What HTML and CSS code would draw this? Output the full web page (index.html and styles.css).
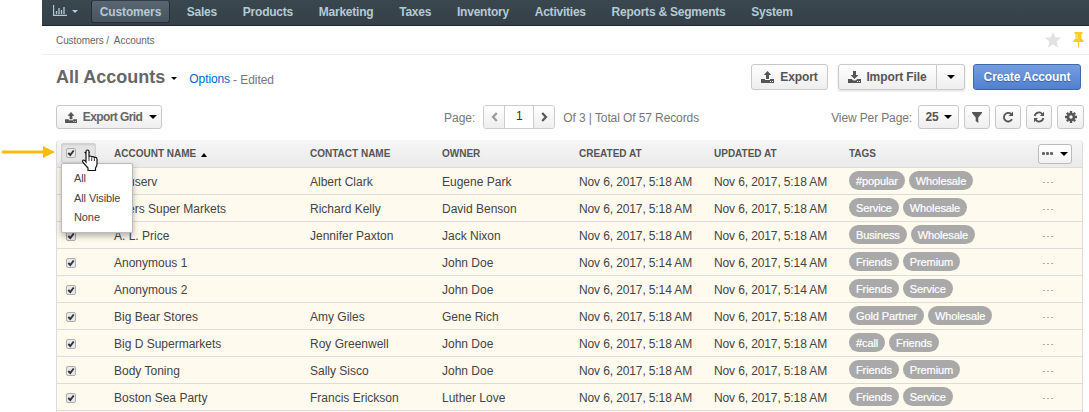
FILE: index.html
```html
<!DOCTYPE html>
<html lang="en">
<head>
<meta charset="utf-8">
<title>All Accounts</title>
<link rel="stylesheet" href="styles.css">
</head>
<body>
<svg class="defs" aria-hidden="true">
  <symbol id="upload" viewBox="0 0 13 12"><path d="M6.500 0 10.300 4H8v4H5V4H2.700zM0 8h4v1h5V8h4v4H0zM9 10v1h1v-1zm2 0v1h1v-1z" fill-rule="evenodd"/></symbol>
  <symbol id="download" viewBox="0 0 13 12"><path d="M5 0h3v4h2.500l-4 4-4-4H5zM0 8h3.600l2 1.500h1.800L9.400 8H13v4H0zM9 10v1h1v-1zm2 0v1h1v-1z" fill-rule="evenodd"/></symbol>
  <symbol id="check" viewBox="0 0 12 12"><rect x=".5" y=".5" width="9" height="9" rx="1.500" fill="#e9e9e9" stroke="#adadad"/><path d="M2.300 5 4.300 7 7.700 2.500" fill="none" stroke="#333" stroke-width="1.900"/></symbol>
</svg>
<div class="app">
  <nav class="nav">
    <span class="dash"><svg width="14" height="11" viewBox="0 0 14 11"><path d="M.5 0v10.500H14M3.500 9V6M6 9V3M8.500 9V5M11 9V2" fill="none" stroke="currentColor" stroke-width="1.300"/></svg><i class="caret light"></i></span>
    <a class="item active">Customers</a><a class="item">Sales</a><a class="item">Products</a><a class="item">Marketing</a><a class="item">Taxes</a><a class="item">Inventory</a><a class="item">Activities</a><a class="item">Reports &amp; Segments</a><a class="item">System</a>
  </nav>
  <div class="crumbs">
    <span class="trail">Customers /&nbsp; Accounts</span>
    <span class="marks">
      <svg width="16" height="16" viewBox="0 0 16 16"><path d="m8 0 2.300 5.300 5.700.5-4.300 3.800L13 15.500l-5-3-5 3 1.300-5.900L0 5.800l5.700-.5z" fill="#e2e2e2"/></svg>
      <svg width="11" height="16" viewBox="0 0 11 16"><path d="M1.500 0h8v2h-1v4.500q2 1.200 2.500 3.500H6.200L5.800 16h-.6L4.700 10H0q.5-2.300 2.500-3.500V2h-1z" fill="#fbcb28"/><path d="M4 2v5" stroke="#fff2b8" stroke-width=".8"/></svg>
    </span>
  </div>
  <div class="title-row">
    <h1>All Accounts</h1><i class="caret title-caret"></i>
    <a class="options">Options</a><span class="edited">- Edited</span>
    <div class="actions">
      <button class="btn export"><svg width="13" height="12"><use href="#upload"/></svg>Export</button>
      <div class="split"><button class="btn import"><svg width="13" height="12"><use href="#download"/></svg>Import File</button><button class="btn more"><i class="caret"></i></button></div>
      <button class="btn create">Create Account</button>
    </div>
  </div>
  <div class="toolbar">
    <button class="btn grid-export"><svg width="12" height="11"><use href="#upload"/></svg><span>Export Grid</span><i class="caret"></i></button>
    <div class="pager">
      <span class="page-label">Page:</span>
      <div class="pages"><span class="step off"><svg width="7" height="10" viewBox="0 0 7 10"><path d="M5.800 1 2 5l3.800 4" fill="none" stroke="#999" stroke-width="2.200"/></svg></span><span class="num">1</span><span class="step"><svg width="7" height="10" viewBox="0 0 7 10"><path d="M1.200 1 5 5 1.200 9" fill="none" stroke="#555" stroke-width="2.200"/></svg></span></div>
      <span class="total">Of 3 | Total Of 57 Records</span>
    </div>
    <div class="view">
      <span class="view-label">View Per Page:</span>
      <button class="btn size">25<i class="caret"></i></button>
      <button class="btn sq"><svg width="10" height="11" viewBox="0 0 10 11"><path d="M0 0h10v1L6.300 5.500V11L3.700 9V5.500L0 1z"/></svg></button>
      <button class="btn sq"><svg width="12" height="12" viewBox="0 0 12 12"><path d="M10 8.300A4.300 4.300 0 1 1 9 2.900" fill="none" stroke="currentColor" stroke-width="1.800"/><path d="M11 .5V5H6.500z"/></svg></button>
      <button class="btn sq"><svg width="12" height="12" viewBox="0 0 12 12"><path d="M1.700 5A4.300 4.300 0 0 1 9.300 3.100M10.300 7A4.300 4.300 0 0 1 2.700 8.900" fill="none" stroke="currentColor" stroke-width="1.700"/><path d="M11 .8V5H7zM1 11.200V7h4z"/></svg></button>
      <button class="btn sq gear"><svg width="12" height="12" viewBox="0 0 12 12"><circle cx="6" cy="6" r="3" fill="none" stroke="currentColor" stroke-width="2.600"/><path d="M6 0v2M6 10v2M0 6h2M10 6h2M1.800 1.800l1.400 1.400M8.800 8.800l1.400 1.400M1.800 10.200l1.400-1.400M8.800 3.200l1.400-1.400" stroke="currentColor" stroke-width="2.400"/></svg></button>
    </div>
  </div>
  <div class="grid">
    <div class="row head">
      <div class="select-cell"><div class="select-all"><svg width="12" height="12"><use href="#check"/></svg><i class="caret"></i></div>
        <div class="menu"><a>All</a><a>All Visible</a><a>None</a></div>
        <svg class="hand" width="18" height="23" viewBox="0 0 18 23"><path d="M5 13V2.500Q5 1 6.500 1T8 2.500V8q0-1 1.300-1t1.400 1.300q0-.8 1.300-.7t1.400 1.500q0-.8 1.200-.7T16 10v5q0 2-1.500 4v2.500H7V19L2 13.500Q1 12 2 11.200t3 1.800z" fill="#fff" stroke="#111" stroke-width="1.200"/><path d="M8 8v4M10.700 8.500V12M13.400 9.200V12" stroke="#222" stroke-width=".9"/></svg>
      </div>
      <span>Account Name<i class="sort"></i></span><span>Contact Name</span><span>Owner</span><span>Created At</span><span>Updated At</span><span>Tags</span>
      <div class="cols"><b class="dots"><i></i><i></i><i></i></b><i class="caret"></i></div>
    </div>
    <div class="row"><svg class="cb" width="12" height="12"><use href="#check"/></svg><span>Acuserv</span><span>Albert Clark</span><span>Eugene Park</span><span class="date">Nov 6, 2017, 5:18 AM</span><span class="date">Nov 6, 2017, 5:18 AM</span><span class="tags"><em>#popular</em><em>Wholesale</em></span><span class="dots"><i></i><i></i><i></i></span></div>
    <div class="row"><svg class="cb" width="12" height="12"><use href="#check"/></svg><span>Akers Super Markets</span><span>Richard Kelly</span><span>David Benson</span><span class="date">Nov 6, 2017, 5:18 AM</span><span class="date">Nov 6, 2017, 5:18 AM</span><span class="tags"><em>Service</em><em>Wholesale</em></span><span class="dots"><i></i><i></i><i></i></span></div>
    <div class="row"><svg class="cb" width="12" height="12"><use href="#check"/></svg><span>A. L. Price</span><span>Jennifer Paxton</span><span>Jack Nixon</span><span class="date">Nov 6, 2017, 5:18 AM</span><span class="date">Nov 6, 2017, 5:18 AM</span><span class="tags"><em>Business</em><em>Wholesale</em></span><span class="dots"><i></i><i></i><i></i></span></div>
    <div class="row"><svg class="cb" width="12" height="12"><use href="#check"/></svg><span>Anonymous 1</span><span></span><span>John Doe</span><span class="date">Nov 6, 2017, 5:14 AM</span><span class="date">Nov 6, 2017, 5:14 AM</span><span class="tags"><em>Friends</em><em>Premium</em></span><span class="dots"><i></i><i></i><i></i></span></div>
    <div class="row"><svg class="cb" width="12" height="12"><use href="#check"/></svg><span>Anonymous 2</span><span></span><span>John Doe</span><span class="date">Nov 6, 2017, 5:14 AM</span><span class="date">Nov 6, 2017, 5:14 AM</span><span class="tags"><em>Friends</em><em>Service</em></span><span class="dots"><i></i><i></i><i></i></span></div>
    <div class="row"><svg class="cb" width="12" height="12"><use href="#check"/></svg><span>Big Bear Stores</span><span>Amy Giles</span><span>Gene Rich</span><span class="date">Nov 6, 2017, 5:18 AM</span><span class="date">Nov 6, 2017, 5:18 AM</span><span class="tags"><em>Gold Partner</em><em>Wholesale</em></span><span class="dots"><i></i><i></i><i></i></span></div>
    <div class="row"><svg class="cb" width="12" height="12"><use href="#check"/></svg><span>Big D Supermarkets</span><span>Roy Greenwell</span><span>John Doe</span><span class="date">Nov 6, 2017, 5:18 AM</span><span class="date">Nov 6, 2017, 5:18 AM</span><span class="tags"><em>#call</em><em>Friends</em></span><span class="dots"><i></i><i></i><i></i></span></div>
    <div class="row"><svg class="cb" width="12" height="12"><use href="#check"/></svg><span>Body Toning</span><span>Sally Sisco</span><span>John Doe</span><span class="date">Nov 6, 2017, 5:18 AM</span><span class="date">Nov 6, 2017, 5:18 AM</span><span class="tags"><em>Friends</em><em>Premium</em></span><span class="dots"><i></i><i></i><i></i></span></div>
    <div class="row"><svg class="cb" width="12" height="12"><use href="#check"/></svg><span>Boston Sea Party</span><span>Francis Erickson</span><span>Luther Love</span><span class="date">Nov 6, 2017, 5:18 AM</span><span class="date">Nov 6, 2017, 5:18 AM</span><span class="tags"><em>Friends</em><em>Service</em></span><span class="dots"><i></i><i></i><i></i></span></div>
    <div class="row last"></div>
  </div>
</div>
<svg class="arrow" width="55" height="12" viewBox="0 0 55 12"><path d="M2 4.500h41V0l12 6-12 6V7.500H2q-1-1.500 0-3z" fill="#fbbd0d"/></svg>
</body>
</html>
```
FILE: styles.css
```css
* { box-sizing: border-box; }
body { margin: 0; height: 412px; overflow: hidden; background: #fff; font: 12px/16px "Liberation Sans", Arial, sans-serif; color: #444; white-space: nowrap; }
.defs { position: absolute; width: 0; height: 0; }
.app { margin-left: 42px; }
.nav { height: 26px; display: flex; align-items: flex-start; background: linear-gradient(#3b474f, #343f47); border-bottom: 1px solid #1f282f; color: #b4cad5; }
.dash { width: 49px; height: 23px; padding-left: 11px; display: flex; align-items: center; gap: 5px; }
.dash svg { margin-top: -2px; }
.item { height: 24px; padding: 0 13px 0 12.800px; line-height: 24px; font-weight: bold; letter-spacing: -.23px; }
.item.active { height: 23px; width: 79px; margin-right: 4px; padding: 0; text-align: center; background: linear-gradient(#596673, #48545f); border: 1px solid #252e36; border-top-color: #303b44; border-radius: 3px; line-height: 22px; letter-spacing: -.15px; }
.caret { display: block; width: 0; height: 0; border: 4px solid transparent; border-top-color: #000; border-bottom: 0; }
.caret.light { border-width: 3px; border-top-color: #b4cad5; border-bottom: 0; }
.crumbs { height: 29px; border-bottom: 1px solid #ececec; padding: 0 5px 0 14px; display: flex; align-items: center; justify-content: space-between; font-size: 10px; color: #666; }
.trail { padding-top: 2px; letter-spacing: -.08px; }
.marks { display: flex; gap: 12px; }
.marks svg:first-child { margin-left: -1px; }
.title-row { height: 44px; padding: 0 8px 0 14px; display: flex; align-items: center; }
h1 { margin: 0; font-size: 18px; line-height: 24px; color: #666; }
.title-caret { margin: 2px 12px 0 6px; border-width: 3.500px; border-bottom: 0; }
.options { color: #0068c9; padding-top: 4px; letter-spacing: -.1px; }
.edited { color: #777; padding: 5px 0 0 3px; letter-spacing: -.05px; }
.actions { margin-left: auto; display: flex; gap: 10px; }
.btn { height: 26px; padding: 0; display: flex; align-items: center; justify-content: center; border: 1px solid #c9c9c9; border-radius: 3px; background: linear-gradient(#fff, #eee); color: #555; font: bold 12px/16px "Liberation Sans", Arial, sans-serif; letter-spacing: -.1px; }
.btn svg { fill: #555; }
.export { width: 77px; gap: 6px; }
.split { display: flex; box-shadow: 0 1px 2px #ddd; }
.import { width: 99px; gap: 5px; border-radius: 3px 0 0 3px; }
.more { width: 28px; border-left: 0; border-radius: 0 3px 3px 0; }
.create { width: 108px; margin-left: -2px; color: #fff; border-color: #3f68ab; background: linear-gradient(#759ee1, #5280ce); text-shadow: 0 1px 1px #315a9d; }
.toolbar { height: 41px; padding: 6px 5px 0 14px; display: flex; align-items: flex-start; }
.toolbar .btn { height: 24px; }
.toolbar .grid-export { width: 106px; gap: 6px; padding-left: 4px; color: #666; letter-spacing: -.55px; }
.grid-export .caret { margin-left: 1px; }
.toolbar .grid-export span { letter-spacing: -.6px; }
.pager { display: flex; align-items: center; margin-left: 282px; color: #777; }
.pages { display: flex; width: 72px; height: 24px; margin: 0 8px; border: 1px solid #ccc; border-radius: 3px; overflow: hidden; }
.step { width: 20px; display: grid; place-items: center; background: linear-gradient(#fff, #eee); }
.num { flex: 1; border: solid #ccc; border-width: 0 1px; text-align: center; line-height: 21px; color: #333; }
.total { letter-spacing: -.1px; padding-top: 1px; }
.page-label, .view-label { padding-top: 1px; }
.view { margin-left: auto; display: flex; align-items: center; gap: 5px; color: #777; }
.view-label { margin-right: 1px; letter-spacing: -.12px; }
.size { width: 41px; gap: 5px; }
.sq { width: 26px; }
.sq.gear { width: 27px; }
.grid { width: 1027px; margin-left: 14px; border: 1px solid #dcdcdc; border-top: 0; border-bottom: 0; border-radius: 4px 4px 0 0; }
.row { height: 27px; display: grid; grid-template-columns: 57px 196px 132px 137px 135px 135px 189px 44px; align-items: center; background: #fffaee; border-bottom: 1px solid #dcdcdc; }
.row.last { height: 1px; border: 0; }
.row > span { padding-top: 1px; }
.row.head { height: 28px; background: linear-gradient(#f6f6f6, #eaeaea); border-radius: 4px 4px 0 0; color: #555; font-size: 10px; font-weight: bold; text-transform: uppercase; }
.cb { margin-left: 9px; margin-top: 3px; }
.row > .date { letter-spacing: -.12px; }
.select-cell { position: relative; height: 27px; padding: 3px 0 0 4px; }
.select-all { display: flex; align-items: center; gap: 11px; width: 35px; height: 20px; padding: 1px 0 0 4px; border: 1px solid #d2d2d2; border-radius: 2px; background: #e4e4e4; box-shadow: inset 0 1px 2px #ccc; }
.select-all .caret { margin-left: -5px; border-width: 3px; border-bottom: 0; }
.menu { position: absolute; z-index: 2; left: 4px; top: 23px; width: 72px; height: 70px; padding: 5px 0 0 12px; background: #fff; border: 1px solid #bbb; border-radius: 2px; box-shadow: 0 3px 6px rgba(0,0,0,.3); font-size: 11px; font-weight: normal; text-transform: none; letter-spacing: -.1px; color: #444; }
.menu a { display: block; line-height: 19.500px; }
.hand { position: absolute; z-index: 3; left: 24px; top: 9px; }
.sort { display: inline-block; margin-left: 5px; border: 3.500px solid transparent; border-bottom: 4px solid #000; border-top: 0; }
.cols { width: 34px; height: 20px; padding: 0 3px; display: flex; align-items: center; justify-content: space-between; border: 1px solid #bbb; border-radius: 3px; background: linear-gradient(#fff, #f1f1f1); }
.dots { display: flex; gap: 1px; }
.dots i { width: 3px; height: 3px; border-radius: 1px; background: #666; }
.row > .dots { gap: 2px; margin: 2px 0 0 5px; padding: 0; }
.row > .dots i { width: 2px; height: 1px; border-radius: 0; background: #aaa; }
.row > .tags { display: flex; gap: 4px; padding: 0 0 2px; }
.tags em { height: 19px; padding: 0 7px; border-radius: 10px; background: #a9a9a9; color: #fff; font: 11px/20px "Liberation Sans", Arial, sans-serif; letter-spacing: -.12px; -webkit-text-stroke: .2px #fff; }
.arrow { position: absolute; left: 0; top: 146px; }
```
